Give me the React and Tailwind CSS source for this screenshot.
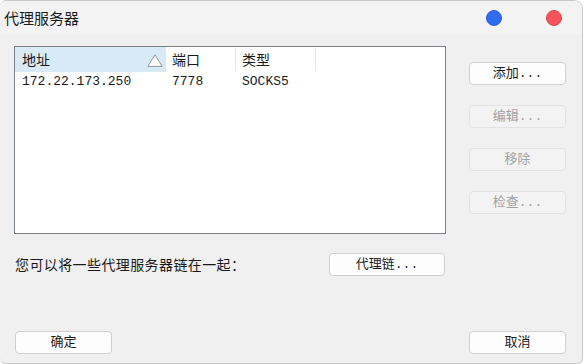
import React from "react";

const cjk = { fontFamily: '"Noto Sans CJK SC", "Noto Sans", sans-serif' };

function Btn({ children, disabled, className = "" }) {
  return (
    <div
      className={
        "flex items-center justify-center h-[23px] rounded-[4px] border text-[13px] leading-none " +
        (disabled
          ? "border-[#e3e3e3] bg-[#f3f3f3] text-[#a2a2a2] "
          : "border-[#d0d0d0] bg-[#fdfdfd] text-[#1b1b1b] ") +
        className
      }
      style={{ fontFamily: '"Liberation Mono", "Noto Sans CJK SC", monospace' }}
    >
      {children}
    </div>
  );
}

export default function App() {
  return (
    <div
      className="w-[583px] h-[364px] bg-[#f0f0f0] border-r border-t border-b border-[#c8c8c8] rounded-tr-[9px] rounded-br-[6px] rounded-tl-[6px] rounded-bl-[6px] flex flex-col overflow-hidden"
      style={cjk}
    >
      {/* title bar */}
      <div className="h-[33px] bg-[#f3f3f3] flex items-center pl-[4px] pr-[20px] shrink-0">
        <span className="text-[15px] text-[#1a1a1a] leading-none">代理服务器</span>
        <div className="flex-1" />
        <div className="w-[16px] h-[16px] rounded-full bg-[#2f6cf0] border border-[#2a5fd6]" />
        <div className="w-[16px] h-[16px] rounded-full bg-[#f5555a] border border-[#d9464c] ml-[44px]" />
      </div>

      {/* main row */}
      <div className="flex mt-[12px]">
        <div className="ml-[14px] w-[432px] h-[188px] border border-[#7b7f86] bg-white flex flex-col">
          <div className="flex h-[25px] text-[14px] text-[#1a1a1a]">
            <div className="w-[151px] bg-[#d9eaf7] flex items-center pl-[7px] relative">
              <span>地址</span>
              <svg className="absolute left-[132px] top-[7px]" width="16" height="13" viewBox="0 0 16 13">
                <path d="M8 0.8 L15.2 12.4 L0.8 12.4 Z" fill="#ffffff" stroke="#8f949b" strokeWidth="1" />
              </svg>
            </div>
            <div className="w-[69px] flex items-center pl-[6px]">端口</div>
            <div className="w-px bg-[#e5e5e5] my-[1px]" />
            <div className="w-[79px] flex items-center pl-[6px]">类型</div>
            <div className="w-px bg-[#e5e5e5] my-[1px]" />
          </div>
          <div
            className="flex h-[20px] items-center text-[13px] text-[#1a1a1a]"
            style={{ fontFamily: '"Liberation Mono", monospace' }}
          >
            <div className="w-[151px] pl-[7px]">172.22.173.250</div>
            <div className="w-[70px] pl-[6px]">7778</div>
            <div className="w-[80px] pl-[6px]">SOCKS5</div>
          </div>
        </div>

        <div className="ml-[23px] w-[97px] pt-[16px] flex flex-col gap-[20px]">
          <Btn>添加...</Btn>
          <Btn disabled>编辑...</Btn>
          <Btn disabled>移除</Btn>
          <Btn disabled>检查...</Btn>
        </div>
      </div>

      {/* proxy chain row */}
      <div className="flex items-center mt-[19px]">
        <div className="ml-[15px] w-[314px] text-[14px] text-[#1a1a1a] tracking-[0.4px]">
          您可以将一些代理服务器链在一起：
        </div>
        <Btn className="w-[116px]">代理链...</Btn>
      </div>

      <div className="flex-1" />

      {/* bottom buttons */}
      <div className="flex items-center justify-between pl-[15px] pr-[16px] mb-[9px]">
        <Btn className="w-[97px]">确定</Btn>
        <Btn className="w-[97px]">取消</Btn>
      </div>
    </div>
  );
}
